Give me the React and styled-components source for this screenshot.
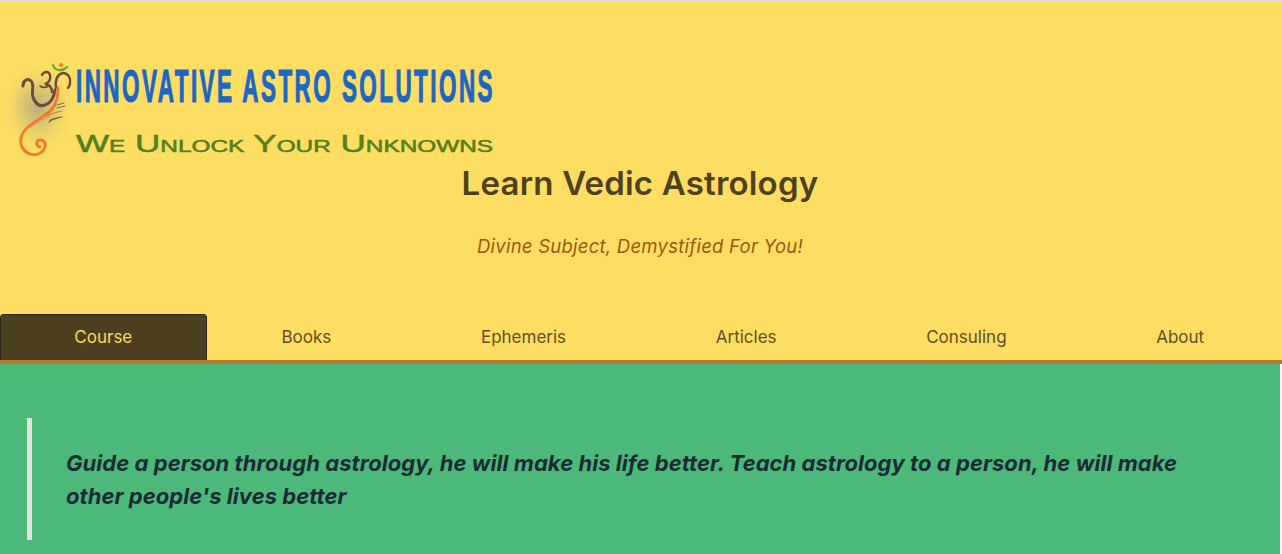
import React from "react";
import styled, { createGlobalStyle } from "styled-components";

const GlobalStyle = createGlobalStyle`
  html, body {
    margin: 0;
    padding: 0;
    background: #ffffff;
    overflow: hidden;
    font-family: Inter, "Liberation Sans", sans-serif;
  }
`;

const tabs = ["Course", "Books", "Ephemeris", "Articles", "Consuling", "About"];

export default function App() {
  return (
    <Page>
      <GlobalStyle />
      <Header>
        <Logo viewBox="0 55 500 108" role="img" aria-label="Innovative Astro Solutions">
          <defs>
            <radialGradient id="glow" cx="50%" cy="50%" r="50%">
              <stop offset="0%" stopColor="#a9a884" stopOpacity="0.85" />
              <stop offset="40%" stopColor="#bdb47c" stopOpacity="0.55" />
              <stop offset="75%" stopColor="#e0c96f" stopOpacity="0.22" />
              <stop offset="100%" stopColor="#fedd63" stopOpacity="0" />
            </radialGradient>
          </defs>
          <ellipse cx="38" cy="107" rx="38" ry="46" fill="url(#glow)" />
          {/* om */}
          <g fill="none" stroke="#6d4c3d" strokeLinecap="round">
            <path d="M23 86C23 80 28 78 31 81C35 85 31 91 33 97C35 104 40 107 45 105C51 103 54 97 55 90" strokeWidth="3" />
            <path d="M42 75C44 71 49 71 50 75C51 79 49 83 45 84C50 85 52 88 52 92" strokeWidth="2.4" />
            <path d="M56 88C55 79 58 74 63 73C68 73 71 78 70 83C70 85 69 87 68 88" strokeWidth="2.4" />
            <path d="M40 86C43 88 47 88 49 85" strokeWidth="1.6" />
          </g>
          <path d="M53 65C55 71 62 72 67 67" fill="none" stroke="#58b030" strokeWidth="2.2" strokeLinecap="round" />
          <circle cx="61" cy="65" r="2" fill="#ef7b25" />
          {/* trunk */}
          <path
            d="M58 88C58 97 56 104 52 109C46 116 36 120 28 127C21 133 19 141 22 147C25 153 32 156 38 154C44 152 46 147 45 143C43 139 38 139 37 142C36 145 38 147 40 147"
            fill="none"
            stroke="#f0792c"
            strokeWidth="2.8"
            strokeLinecap="round"
          />
          <path d="M50 116C43 120 36 122 31 128" fill="none" stroke="#d9893f" strokeWidth="0.8" />
          <g fill="none" strokeLinecap="round">
            <path d="M47 116C52 113 57 112 62 111" stroke="#e07a35" strokeWidth="1.2" />
            <path d="M49 122C53 118 58 118 62 117" stroke="#6d5a46" strokeWidth="1.1" />
            <path d="M50 120C53 119 56 119 58 118" stroke="#6d5a46" strokeWidth="0.8" />
            <path d="M57 105L64 103M57 108L65 106" stroke="#7b6a52" strokeWidth="1" />
          </g>
          <BrandName x="76" y="102" textLength="419" lengthAdjust="spacingAndGlyphs">
            INNOVATIVE ASTRO SOLUTIONS
          </BrandName>
          <Tagline x="76" y="152" textLength="417" lengthAdjust="spacingAndGlyphs">
            We Unlock Your Unknowns
          </Tagline>
        </Logo>
        <Title>Learn Vedic Astrology</Title>
        <Subtitle>Divine Subject, Demystified For You!</Subtitle>
        <Nav>
          {tabs.map((tab, i) => (
            <Tab key={tab} $active={i === 0}>
              {tab}
            </Tab>
          ))}
        </Nav>
      </Header>
      <Main>
        <Quote>
          Guide a person through astrology, he will make his life better. Teach
          astrology to a person, he will make other people's lives better
        </Quote>
      </Main>
    </Page>
  );
}

const Page = styled.div`
  width: 100%;
  height: 554px;
  overflow: hidden;
`;

const Header = styled.header`
  background: #fedd63;
  border-top: 2px solid #dcdcdc;
  border-bottom: 4px solid #b7792b;
  padding-top: 53px;
`;

const Logo = styled.svg`
  display: block;
  width: 500px;
  height: 108px;
`;

const BrandName = styled.text`
  font-family: "Liberation Sans", sans-serif;
  font-size: 46px;
  font-weight: 700;
  letter-spacing: 5px;
  fill: #1c66c4;
  stroke: #1c66c4;
  stroke-width: 1.2px;
`;

const Tagline = styled.text`
  font-family: "Liberation Sans", sans-serif;
  font-size: 23px;
  font-weight: 400;
  font-variant: small-caps;
  fill: #55801f;
  stroke: #55801f;
  stroke-width: 0.5px;
`;

const Title = styled.h1`
  width: 1280px;
  margin: 0;
  text-align: center;
  font-size: 33px;
  line-height: 40px;
  font-weight: 600;
  letter-spacing: 0.2px;
  color: #4e4120;
`;

const Subtitle = styled.p`
  width: 1280px;
  margin: 31px 0 0;
  text-align: center;
  font-size: 18.5px;
  line-height: 24px;
  font-style: italic;
  letter-spacing: 0.25px;
  color: #975a16;
`;

const Nav = styled.nav`
  display: flex;
  width: 1279px;
  height: 46px;
  margin-top: 56px;
`;

const Tab = styled.a`
  flex: 1 1 auto;
  display: flex;
  align-items: center;
  justify-content: center;
  padding: 0 ${(p) => (p.$active ? "15.5px" : "16px")} 1px;
  font-size: 17px;
  box-sizing: border-box;
  color: ${(p) => (p.$active ? "#f6d860" : "#5f5023")};
  background: ${(p) => (p.$active ? "#4d4020" : "transparent")};
  border: 1px solid ${(p) => (p.$active ? "#2a2616" : "transparent")};
  border-bottom: 0;
  border-radius: 4px 4px 0 0;
`;

const Main = styled.main`
  width: 1280px;
  height: 190px;
  box-sizing: border-box;
  padding: 54px 27px 0;
  background: #4cb97b;
`;

const Quote = styled.blockquote`
  margin: 0;
  padding: 29px 60px 27px 34px;
  border-left: 5px solid #e2e2e2;
  font-size: 22px;
  line-height: 33px;
  font-weight: 700;
  font-style: italic;
  letter-spacing: 0.05px;
  color: #1a2b33;
`;
